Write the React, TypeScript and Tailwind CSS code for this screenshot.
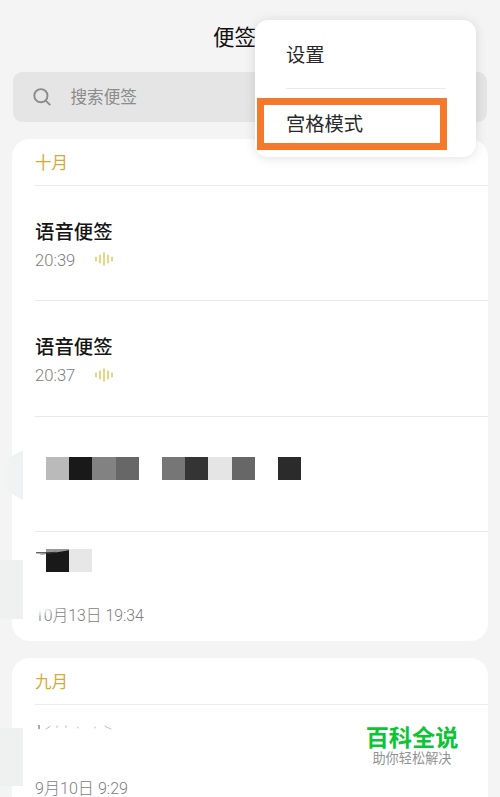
const cjk = "font-['Noto_Sans_CJK_SC',sans-serif]";
const mixed = "font-['Roboto','Noto_Sans_CJK_SC',sans-serif]";

const mosaic = [
  'bg-[#bababa]',
  'bg-[#191919]',
  'bg-[#828282]',
  'bg-[#676767]',
  'bg-transparent',
  'bg-[#767676]',
  'bg-[#343434]',
  'bg-[#e5e5e5]',
  'bg-[#676767]',
  'bg-transparent',
  'bg-[#2b2b2b]',
];

function VoiceIcon() {
  return (
    <svg
      width="18"
      height="14"
      viewBox="0 0 18 14"
      fill="none"
      stroke="#e2c55c"
      strokeWidth="1.5"
      strokeLinecap="round"
      className="mb-[3px]"
    >
      <path d="M1 5.2v3.6M5 3.2v7.6M9 1v12M13 3.2v7.6M17 5.2v3.6" />
    </svg>
  );
}

function VoiceNote({ time }: { time: string }) {
  return (
    <li className="ml-[23px] h-[115.5px] border-b border-[#e9e9e9] pt-[31px]">
      <h3 className="text-[19.4px] leading-7 font-medium text-[#151515]">语音便签</h3>
      <div className={`mt-[3px] flex items-center text-[16.6px] leading-[26px] font-light text-[#7d7d7d] ${mixed}`}>
        <span className="w-[60px]">{time}</span>
        <VoiceIcon />
      </div>
    </li>
  );
}

function MonthHeading({ children }: { children: string }) {
  return (
    <h2 className="ml-[23px] h-[46.5px] border-b border-[#ececec] text-[16.5px] leading-[47px] text-[#d3ab37]">
      {children}
    </h2>
  );
}

function Menu() {
  return (
    <div className="absolute top-5 left-[255px] h-[137px] w-[221px] rounded-[13px] bg-white text-[19.3px] text-[#292929] shadow-[0_1px_12px_rgba(0,0,0,0.12)]">
      <div className="ml-[31px] h-[69px] w-[160px] border-b border-[#eaeaea] leading-[69px]">设置</div>
      <div className="mt-[9px] ml-[1.5px] h-[51.5px] w-[190.5px] border-[7.5px] border-[#f5792b] pl-[22.5px] leading-[37px]">
        宫格模式
      </div>
    </div>
  );
}

export default function App() {
  return (
    <div className={`relative h-[797px] w-[500px] overflow-hidden bg-[#f4f4f4] ${cjk}`}>
      <header className="h-[72px] pl-[213px] text-[21.5px] leading-[72px] text-[#111]">便签</header>

      <div className="mx-[13px] flex h-[49.5px] items-center rounded-[9px] bg-[#e5e5e5] pl-5 text-[16.6px] text-[#8b8b8b]">
        <svg width="18" height="18" viewBox="0 0 18 18" fill="none" stroke="#8b8b8b" strokeWidth="1.9" className="mt-px">
          <circle cx="7.9" cy="7.7" r="6.6" />
          <path d="M12.4 12.3l4.9 4.9" />
        </svg>
        <span className="ml-[19.5px]">搜索便签</span>
      </div>

      <section className="mx-3 mt-[17.5px] h-[502px] overflow-hidden rounded-[18px] bg-white">
        <MonthHeading>十月</MonthHeading>
        <ul>
          <VoiceNote time="20:39" />
          <VoiceNote time="20:37" />
          <li className="ml-[23px] h-[115px] border-b border-[#e9e9e9] pt-[40px] pl-[11px]">
            <div className="flex">
              {mosaic.map((color, i) => (
                <span key={i} className={`h-[23px] w-[23.2px] ${color}`} />
              ))}
            </div>
          </li>
          <li className="ml-[23px] pt-[17.5px]">
            <div className="flex">
              <svg width="34" height="23" viewBox="0 0 34 23" className="shrink-0">
                <path d="M11 0h23v23H11z" fill="#191919" />
                <path d="M11 0h23v1.2L22 3.2l-11 .6z" fill="#999" />
                <path d="M1 3.2h12l9-.4-6 2-15-.6z" fill="#333" />
                <path d="M5 5.8l5-.6" stroke="#bbb" />
              </svg>
              <span className="h-[23px] w-[23px] bg-[#e7e7e7]" />
            </div>
            <div className={`relative mt-[31px] text-[15.8px] leading-[26px] font-light text-[#7d7d7d] ${mixed}`}>
              10月13日 19:34
              {/* erased corner of the date */}
              <span className="absolute top-0 -left-1 h-[13px] w-8 bg-linear-to-br from-white from-40% to-transparent to-75%" />
            </div>
          </li>
        </ul>
      </section>

      <section className="mx-3 mt-[17px] h-[180px] rounded-[18px] bg-white">
        <MonthHeading>九月</MonthHeading>
        <div className="ml-[23px] pt-[20px]">
          <svg width="80" height="8" viewBox="0 0 80 8" fill="none" stroke="#aaa" strokeLinecap="round">
            <path d="M4 0v3.5" stroke="#777" strokeWidth="1.3" />
            <path d="M11 4l4-2.5M22 1v1.5M31 1v1.5M43 2v1M60 2v1M70 1l3 2M74 3l2 1" opacity=".8" />
          </svg>
          <div className={`mt-[44px] text-[16.1px] leading-6 font-light text-[#7d7d7d] ${mixed}`}>9月10日 9:29</div>
        </div>
      </section>

      {/* smudges along the left edge */}
      <div className="absolute top-[450px] left-0 h-[50px] w-[23px] bg-linear-to-r from-[#f3f4f4] to-[#eff2f2] [clip-path:polygon(0_25%,100%_0,100%_100%,0_75%)]" />
      <div className="absolute top-[560px] left-0 h-[59px] w-[23px] bg-[#eef1f0]" />
      <div className="absolute top-[728px] left-0 h-[58px] w-[23px] bg-[#eef1f0]" />

      <Menu />

      <div className="absolute top-[725px] left-[365px] w-[94px] text-center">
        <div className="text-[23.2px] leading-[23px] font-bold whitespace-nowrap text-[#0cc534]">百科全说</div>
        <div className="mt-[3px] text-[13.2px] leading-[14px] whitespace-nowrap text-[#929292]">助你轻松解决</div>
      </div>
    </div>
  );
}
